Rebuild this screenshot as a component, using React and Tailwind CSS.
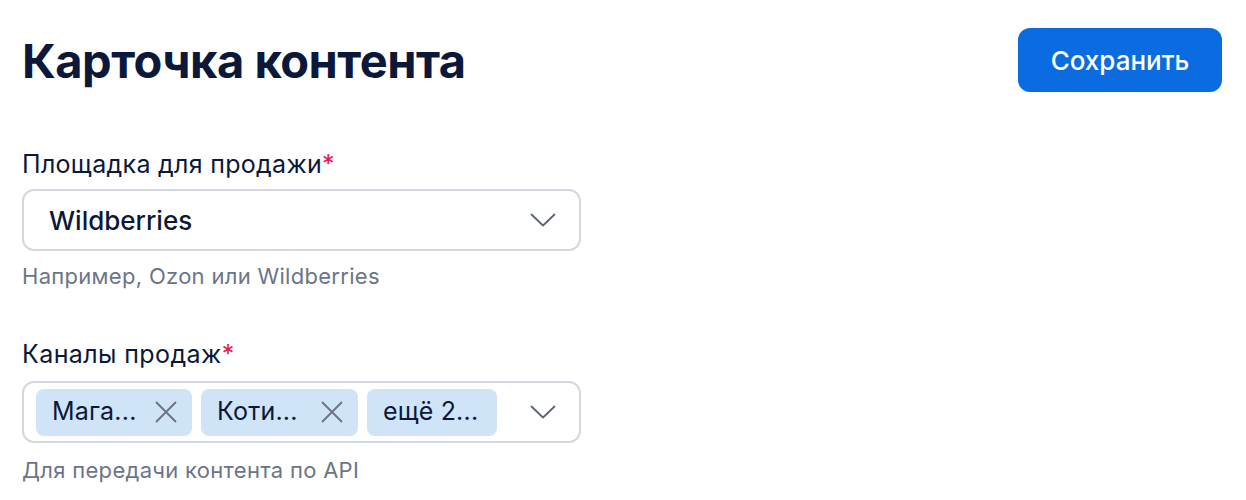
import React from 'react'

const font = { fontFamily: 'Inter, "Noto Sans", sans-serif' }

const Chevron = () => (
  <svg width="26" height="14" viewBox="0 0 26 14" fill="none" className="shrink-0">
    <path d="M1.5 1.5 L13 12.5 L24.5 1.5" stroke="#5b6579" strokeWidth="1.8" strokeLinecap="round" strokeLinejoin="round" />
  </svg>
)

const Cross = () => (
  <svg width="22" height="22" viewBox="0 0 22 22" fill="none" className="shrink-0">
    <path d="M1.5 1.5 L20.5 20.5 M20.5 1.5 L1.5 20.5" stroke="#6b7280" strokeWidth="1.8" strokeLinecap="round" />
  </svg>
)

const Chip = ({ label, removable, width }) => (
  <div className={`flex h-[47px] items-center justify-between rounded-lg bg-[#cfe4f7] pl-[16px] pr-[15px] text-[25px] tracking-[0.2px] text-[#0b1839] ${width}`}>
    <span>{label}</span>
    {removable && <Cross />}
  </div>
)

export default function App() {
  return (
    <div className="min-h-[500px] bg-white pl-[22px] pr-[24px] pt-[28px]" style={font}>
      <div className="flex items-start justify-between">
        <h1 className="mt-[5px] text-[47px] font-bold leading-[56px] tracking-[-0.5px] text-[#0b1839]">Карточка контента</h1>
        <button
          type="button"
          className="h-[64px] w-[204px] rounded-xl bg-[#0a6ce0] text-[26px] font-medium text-white"
        >
          Сохранить
        </button>
      </div>

      <div className="mt-[56px] w-[559px]">
        <label className="block text-[25px] leading-[32px] tracking-[0.3px] text-[#0b1839]">
          Площадка для продажи<span className="text-[#e8194f]">*</span>
        </label>
        <div className="mt-[9px] flex h-[62px] items-center justify-between rounded-xl border-2 border-[#d3d7df] pl-[25px] pr-[23px]">
          <span className="text-[26px] font-medium text-[#0b1839]">Wildberries</span>
          <Chevron />
        </div>
        <p className="mt-[11px] text-[22px] leading-[28px] tracking-[0.3px] text-[#6b7588]">Например, Ozon или Wildberries</p>
      </div>

      <div className="mt-[48px] w-[559px]">
        <label className="block text-[25px] leading-[32px] tracking-[0.4px] text-[#0b1839]">
          Каналы продаж<span className="text-[#e8194f]">*</span>
        </label>
        <div className="mt-[11px] flex h-[62px] items-center justify-between rounded-xl border-2 border-[#d3d7df] pl-[12px] pr-[23px]">
          <div className="flex gap-[9px]">
            <Chip label="Мага..." removable width="w-[156px]" />
            <Chip label="Коти..." removable width="w-[157px]" />
            <Chip label="ещё 2..." width="w-[130px]" />
          </div>
          <Chevron />
        </div>
        <p className="mt-[13px] text-[22px] leading-[28px] tracking-[0.3px] text-[#6b7588]">Для передачи контента по API</p>
      </div>
    </div>
  )
}
